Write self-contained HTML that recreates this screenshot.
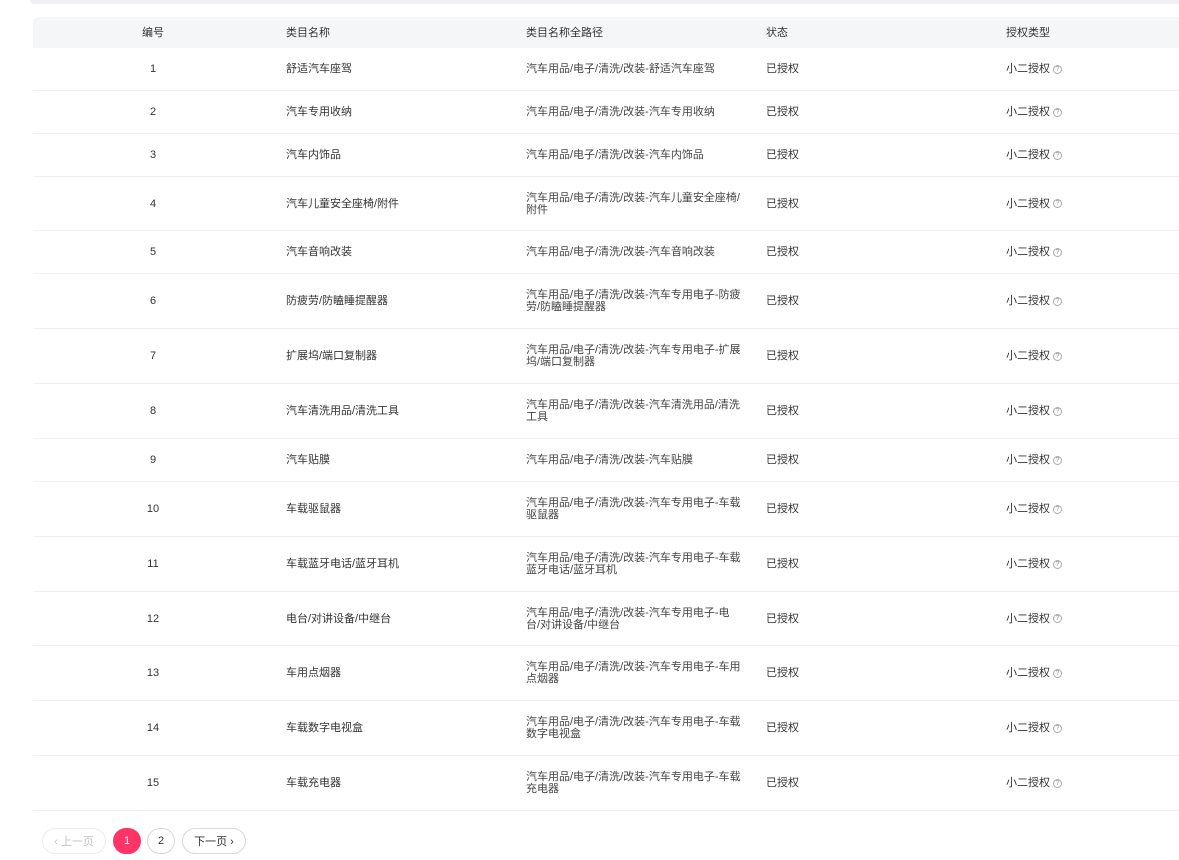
<!DOCTYPE html>
<html><head><meta charset="utf-8">
<style>
*{margin:0;padding:0;box-sizing:border-box}
body{width:1179px;height:860px;background:#fff;font-family:"Liberation Sans","Noto Sans CJK SC",sans-serif;font-size:11px;color:#333;position:relative;overflow:hidden}
.top{position:absolute;left:30px;top:0;width:1160px;height:4px;background:#f0f1f5;border-radius:0 0 0 6px}
.hd{position:absolute;left:33px;top:17px;width:1146px;height:31px;background:#f5f6f8;border-radius:6px 0 0 0}
.row{position:absolute;left:33px;width:1146px;border-bottom:1px solid #f0f0f3}
.c{position:absolute;top:0;bottom:0;display:flex;align-items:center;line-height:12px}
.c1{left:0;width:240px;justify-content:center}
.c2{left:253px}
.c3{left:493px;width:220px;color:#444}
.c4{left:733px}
.c5{left:973px}
.q{display:inline-block;width:9px;height:9px;border:1px solid #aaa;border-radius:50%;font-size:7px;line-height:7px;text-align:center;color:#999;margin-left:3px}
.pg{position:absolute;top:828px;height:26px;border:1px solid #d9d9de;border-radius:13px;display:flex;align-items:center;justify-content:center;font-size:11px;color:#333}
</style></head><body>
<div class="top"></div>
<div class="hd">
<div class="c c1">编号</div><div class="c c2">类目名称</div><div class="c c3" style="color:#333">类目名称全路径</div><div class="c c4">状态</div><div class="c c5">授权类型</div>
</div>
<div id="rows"></div>
<div class="row" style="top:48px;height:43px"><div class="c c1">1</div><div class="c c2">舒适汽车座驾</div><div class="c c3">汽车用品/电子/清洗/改装-舒适汽车座驾</div><div class="c c4">已授权</div><div class="c c5">小二授权<span class="q">?</span></div></div>
<div class="row" style="top:91px;height:43px"><div class="c c1">2</div><div class="c c2">汽车专用收纳</div><div class="c c3">汽车用品/电子/清洗/改装-汽车专用收纳</div><div class="c c4">已授权</div><div class="c c5">小二授权<span class="q">?</span></div></div>
<div class="row" style="top:134px;height:43px"><div class="c c1">3</div><div class="c c2">汽车内饰品</div><div class="c c3">汽车用品/电子/清洗/改装-汽车内饰品</div><div class="c c4">已授权</div><div class="c c5">小二授权<span class="q">?</span></div></div>
<div class="row" style="top:177px;height:54px"><div class="c c1">4</div><div class="c c2">汽车儿童安全座椅/附件</div><div class="c c3">汽车用品/电子/清洗/改装-汽车儿童安全座椅/<br>附件</div><div class="c c4">已授权</div><div class="c c5">小二授权<span class="q">?</span></div></div>
<div class="row" style="top:231px;height:43px"><div class="c c1">5</div><div class="c c2">汽车音响改装</div><div class="c c3">汽车用品/电子/清洗/改装-汽车音响改装</div><div class="c c4">已授权</div><div class="c c5">小二授权<span class="q">?</span></div></div>
<div class="row" style="top:274px;height:55px"><div class="c c1">6</div><div class="c c2">防疲劳/防瞌睡提醒器</div><div class="c c3">汽车用品/电子/清洗/改装-汽车专用电子-防疲<br>劳/防瞌睡提醒器</div><div class="c c4">已授权</div><div class="c c5">小二授权<span class="q">?</span></div></div>
<div class="row" style="top:329px;height:55px"><div class="c c1">7</div><div class="c c2">扩展坞/端口复制器</div><div class="c c3">汽车用品/电子/清洗/改装-汽车专用电子-扩展<br>坞/端口复制器</div><div class="c c4">已授权</div><div class="c c5">小二授权<span class="q">?</span></div></div>
<div class="row" style="top:384px;height:55px"><div class="c c1">8</div><div class="c c2">汽车清洗用品/清洗工具</div><div class="c c3">汽车用品/电子/清洗/改装-汽车清洗用品/清洗<br>工具</div><div class="c c4">已授权</div><div class="c c5">小二授权<span class="q">?</span></div></div>
<div class="row" style="top:439px;height:43px"><div class="c c1">9</div><div class="c c2">汽车贴膜</div><div class="c c3">汽车用品/电子/清洗/改装-汽车贴膜</div><div class="c c4">已授权</div><div class="c c5">小二授权<span class="q">?</span></div></div>
<div class="row" style="top:482px;height:55px"><div class="c c1">10</div><div class="c c2">车载驱鼠器</div><div class="c c3">汽车用品/电子/清洗/改装-汽车专用电子-车载<br>驱鼠器</div><div class="c c4">已授权</div><div class="c c5">小二授权<span class="q">?</span></div></div>
<div class="row" style="top:537px;height:55px"><div class="c c1">11</div><div class="c c2">车载蓝牙电话/蓝牙耳机</div><div class="c c3">汽车用品/电子/清洗/改装-汽车专用电子-车载<br>蓝牙电话/蓝牙耳机</div><div class="c c4">已授权</div><div class="c c5">小二授权<span class="q">?</span></div></div>
<div class="row" style="top:592px;height:54px"><div class="c c1">12</div><div class="c c2">电台/对讲设备/中继台</div><div class="c c3">汽车用品/电子/清洗/改装-汽车专用电子-电<br>台/对讲设备/中继台</div><div class="c c4">已授权</div><div class="c c5">小二授权<span class="q">?</span></div></div>
<div class="row" style="top:646px;height:55px"><div class="c c1">13</div><div class="c c2">车用点烟器</div><div class="c c3">汽车用品/电子/清洗/改装-汽车专用电子-车用<br>点烟器</div><div class="c c4">已授权</div><div class="c c5">小二授权<span class="q">?</span></div></div>
<div class="row" style="top:701px;height:55px"><div class="c c1">14</div><div class="c c2">车载数字电视盒</div><div class="c c3">汽车用品/电子/清洗/改装-汽车专用电子-车载<br>数字电视盒</div><div class="c c4">已授权</div><div class="c c5">小二授权<span class="q">?</span></div></div>
<div class="row" style="top:756px;height:55px"><div class="c c1">15</div><div class="c c2">车载充电器</div><div class="c c3">汽车用品/电子/清洗/改装-汽车专用电子-车载<br>充电器</div><div class="c c4">已授权</div><div class="c c5">小二授权<span class="q">?</span></div></div>
<div class="pg" style="left:42px;width:64px;color:#c4c4c8;border-color:#ececf0">‹ 上一页</div>
<div class="pg" style="left:113px;width:28px;background:#ff3366;border-color:#ff3366;color:#fff">1</div>
<div class="pg" style="left:147px;width:28px">2</div>
<div class="pg" style="left:182px;width:64px">下一页 ›</div>
</body></html>
